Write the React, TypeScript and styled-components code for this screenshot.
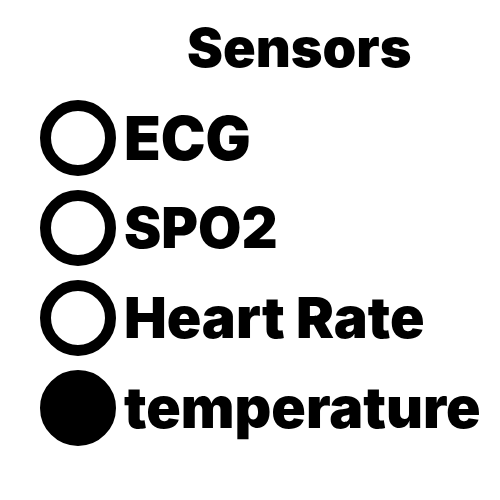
import React, { useState } from "react";
import styled, { createGlobalStyle } from "styled-components";

const GlobalStyle = createGlobalStyle`
  *, *::before, *::after { box-sizing: border-box; }
  body { margin: 0; background: #fff; color: #000; overflow-x: hidden; }
`;

const Panel = styled.main`
  padding: 16px 0 0 40px;
  font-family: Inter, "Open Sans", sans-serif;
  font-weight: 900;
`;

const Title = styled.h1`
  margin: 0 0 20px;
  padding-left: 147px;
  font-size: 54px;
  line-height: 64px;
  font-weight: 900;
`;

const Group = styled.div`
  display: flex;
  flex-direction: column;
  gap: 14px;
`;

const Option = styled.label<{ $size: number }>`
  display: flex;
  align-items: center;
  gap: 8px;
  height: 76px;
  font-size: ${(p) => p.$size}px;
  line-height: 72px;
  white-space: nowrap;
  cursor: pointer;
`;

const Radio = styled.input`
  appearance: none;
  flex: none;
  width: 76px;
  height: 76px;
  margin: 0;
  border: 11px solid #000;
  border-radius: 50%;
  background: #fff;
  cursor: pointer;

  &:checked { background: #000; }
`;

const sensors = [
  { id: "ecg", label: "ECG", size: 60 },
  { id: "spo2", label: "SPO2", size: 56 },
  { id: "heart", label: "Heart Rate", size: 57 },
  { id: "temperature", label: "temperature", size: 57 },
];

export default function App() {
  const [selected, setSelected] = useState("temperature");
  return (
    <>
      <GlobalStyle />
      <Panel>
        <Title id="sensors-title">Sensors</Title>
        <Group role="radiogroup" aria-labelledby="sensors-title">
          {sensors.map((s) => (
            <Option key={s.id} $size={s.size}>
              <Radio
                type="radio"
                name="sensor"
                checked={selected === s.id}
                onChange={() => setSelected(s.id)}
              />
              <span>{s.label}</span>
            </Option>
          ))}
        </Group>
      </Panel>
    </>
  );
}
